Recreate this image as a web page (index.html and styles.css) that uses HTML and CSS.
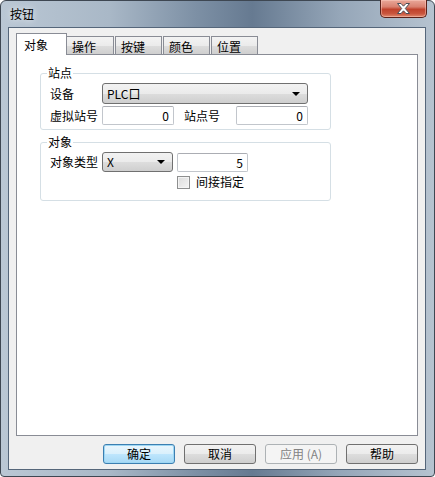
FILE: index.html
```html
<!DOCTYPE html>
<html lang="zh">
<head>
    <meta charset="utf-8">
    <title>按钮</title>
    <link rel="stylesheet" href="styles.css">
</head>
<body>
    <div class="window">
        <div class="title-bar">
            <span class="title">按钮</span>
            <button class="close-btn" title="关闭">
                <svg width="15" height="11" viewBox="0 0 15 11">
                    <path d="M1.5 0.5 H5 L7.5 3.2 L10 0.5 H13.5 L9.3 5.5 L13.5 10.5 H10 L7.5 7.8 L5 10.5 H1.5 L5.7 5.5 Z" fill="#ffffff" stroke="#4a4f58" stroke-width="1"/>
                </svg>
            </button>
        </div>

        <div class="client">
            <div class="tabs">
                <div class="tab active">对象</div>
                <div class="tab">操作</div>
                <div class="tab">按键</div>
                <div class="tab">颜色</div>
                <div class="tab">位置</div>
            </div>

            <div class="tab-panel">
                <fieldset class="group">
                    <legend>站点</legend>
                    <div class="row">
                        <label class="lbl">设备</label>
                        <div class="combo wide">
                            <span>PLC口</span>
                            <span class="arrow"></span>
                        </div>
                    </div>
                    <div class="row mt2">
                        <label class="lbl">虚拟站号</label>
                        <input class="num" type="text" value="0">
                        <label class="lbl lbl-mid">站点号</label>
                        <input class="num" type="text" value="0">
                    </div>
                </fieldset>

                <fieldset class="group second">
                    <legend>对象</legend>
                    <div class="row">
                        <label class="lbl">对象类型</label>
                        <div class="combo small">
                            <span>X</span>
                            <span class="arrow"></span>
                        </div>
                        <input class="num addr" type="text" value="5">
                    </div>
                    <div class="row check-row">
                        <span class="checkbox"></span>
                        <span>间接指定</span>
                    </div>
                </fieldset>
            </div>

            <div class="buttons">
                <button class="btn default">确定</button>
                <button class="btn">取消</button>
                <button class="btn" disabled>应用 (A)</button>
                <button class="btn">帮助</button>
            </div>
        </div>
    </div>
</body>
</html>
```

FILE: styles.css
```css
* {
    box-sizing: border-box;
}

body {
    margin: 0;
    font-family: "Noto Sans CJK SC", "Noto Sans", sans-serif;
    font-size: 12px;
    line-height: 14px;
    color: #000;
    background: #fff;
}

.window {
    width: 435px;
    height: 477px;
    display: flex;
    flex-direction: column;
    border: 1px solid #3e4752;
    border-radius: 6px 6px 4px 4px;
    background: linear-gradient(90deg, #bac7d4 0%, #a9b8c7 25%, #7d90a5 45%, #667a91 58%, #95a6b8 78%, #b6c3d0 100%);
}

/* title bar */
.title-bar {
    height: 26px;
    display: flex;
    justify-content: space-between;
    align-items: flex-start;
    flex: none;
}
.title {
    margin: 6px 0 0 9px;
    text-shadow: 0 0 6px rgba(255, 255, 255, 0.9);
}
.close-btn {
    width: 47px;
    height: 18px;
    margin: -1px 7px 0 0;
    padding: 0;
    border: 1px solid #5b2119;
    border-top: none;
    border-radius: 0 0 5px 5px;
    background: linear-gradient(180deg, #e9a899 0%, #d98170 40%, #c0422c 55%, #c9553d 80%, #e08a6f 100%);
    box-shadow: inset 0 0 0 1px rgba(255, 210, 200, 0.45);
    display: flex;
    align-items: center;
    justify-content: center;
}

/* client area */
.client {
    flex: 1;
    margin: 0 8px 6px 7px;
    border: 1px solid #55667a;
    background: #f0f0f0;
    padding: 5px 7px 5px 7px;
    display: flex;
    flex-direction: column;
}

.tabs {
    height: 21px;
    display: flex;
    align-items: flex-end;
    flex: none;
}
.tab {
    width: 47px;
    height: 18px;
    margin-left: 1px;
    padding: 3px 0 0 5px;
    border: 1px solid #898c95;
    border-bottom: none;
    background: linear-gradient(180deg, #f3f3f3 0%, #ebebeb 50%, #dddddd 51%, #cfcfcf 100%);
}
.tab.active {
    width: 51px;
    height: 22px;
    margin: 0 0 -1px 0;
    padding: 4px 0 0 7px;
    background: #fff;
    position: relative;
    z-index: 1;
}
.tab.active + .tab {
    margin-left: 0;
    border-left: none;
}

.tab-panel {
    flex: 1;
    border: 1px solid #898c95;
    background: #fff;
    padding: 0 0 0 23px;
}

/* groups */
.group {
    width: 291px;
    margin: 11px 0 0 0;
    padding: 3px 10px 4px 9px;
    border: 1px solid #d5dfe5;
    border-radius: 3px;
    min-inline-size: 0;
}
.group.second {
    margin-top: 5px;
}
.group legend {
    padding: 0 1px;
    margin-left: -3px;
}

.row {
    display: flex;
    align-items: center;
}
.mt2 {
    margin-top: 2px;
}
.lbl {
    width: 52px;
    flex: none;
}
.lbl-mid {
    margin-left: 10px;
}

.combo {
    height: 21px;
    display: flex;
    align-items: center;
    justify-content: space-between;
    padding: 0 7px 0 4px;
    border: 1px solid #707070;
    border-radius: 3px;
    background: linear-gradient(180deg, #f2f2f2 0%, #ebebeb 50%, #dddddd 51%, #cfcfcf 100%);
}
.combo.wide {
    width: 206px;
}
.combo.small {
    width: 71px;
    height: 20px;
}
.arrow {
    width: 0;
    height: 0;
    border-left: 4px solid transparent;
    border-right: 4px solid transparent;
    border-top: 4px solid #000;
}

.num {
    width: 72px;
    height: 19px;
    padding: 0 4px;
    border: 1px solid #c2c6cc;
    border-top-color: #abadb3;
    border-radius: 2px;
    background: #fff;
    font: inherit;
    color: #000;
    text-align: right;
}
.num.addr {
    width: 71px;
    margin-left: 4px;
}

.check-row {
    margin-top: 3px;
    padding: 0 0 7px 127px;
    gap: 6px;
}
.checkbox {
    width: 13px;
    height: 13px;
    border: 1px solid #8e8f8f;
    background: linear-gradient(135deg, #dcdcdc 0%, #f4f4f4 100%);
    box-shadow: inset 0 0 0 1px #f4f4f4;
}

/* bottom buttons */
.buttons {
    display: flex;
    justify-content: flex-end;
    gap: 9px;
    margin-top: 8px;
    flex: none;
}
.btn {
    width: 72px;
    height: 20px;
    padding: 0;
    border: 1px solid #707070;
    border-radius: 3px;
    background: linear-gradient(180deg, #f2f2f2 0%, #ebebeb 50%, #dddddd 51%, #cfcfcf 100%);
    font: inherit;
    color: #000;
}
.btn.default {
    border-color: #3c7fb1;
    box-shadow: inset 0 0 0 1px #9ed7f4;
    background: linear-gradient(180deg, #eaf6fd 0%, #d9f0fc 50%, #bee6fd 51%, #a7d9f5 100%);
}
.btn:disabled {
    border-color: #adb2b5;
    background: #f4f4f4;
    color: #838383;
}
```
